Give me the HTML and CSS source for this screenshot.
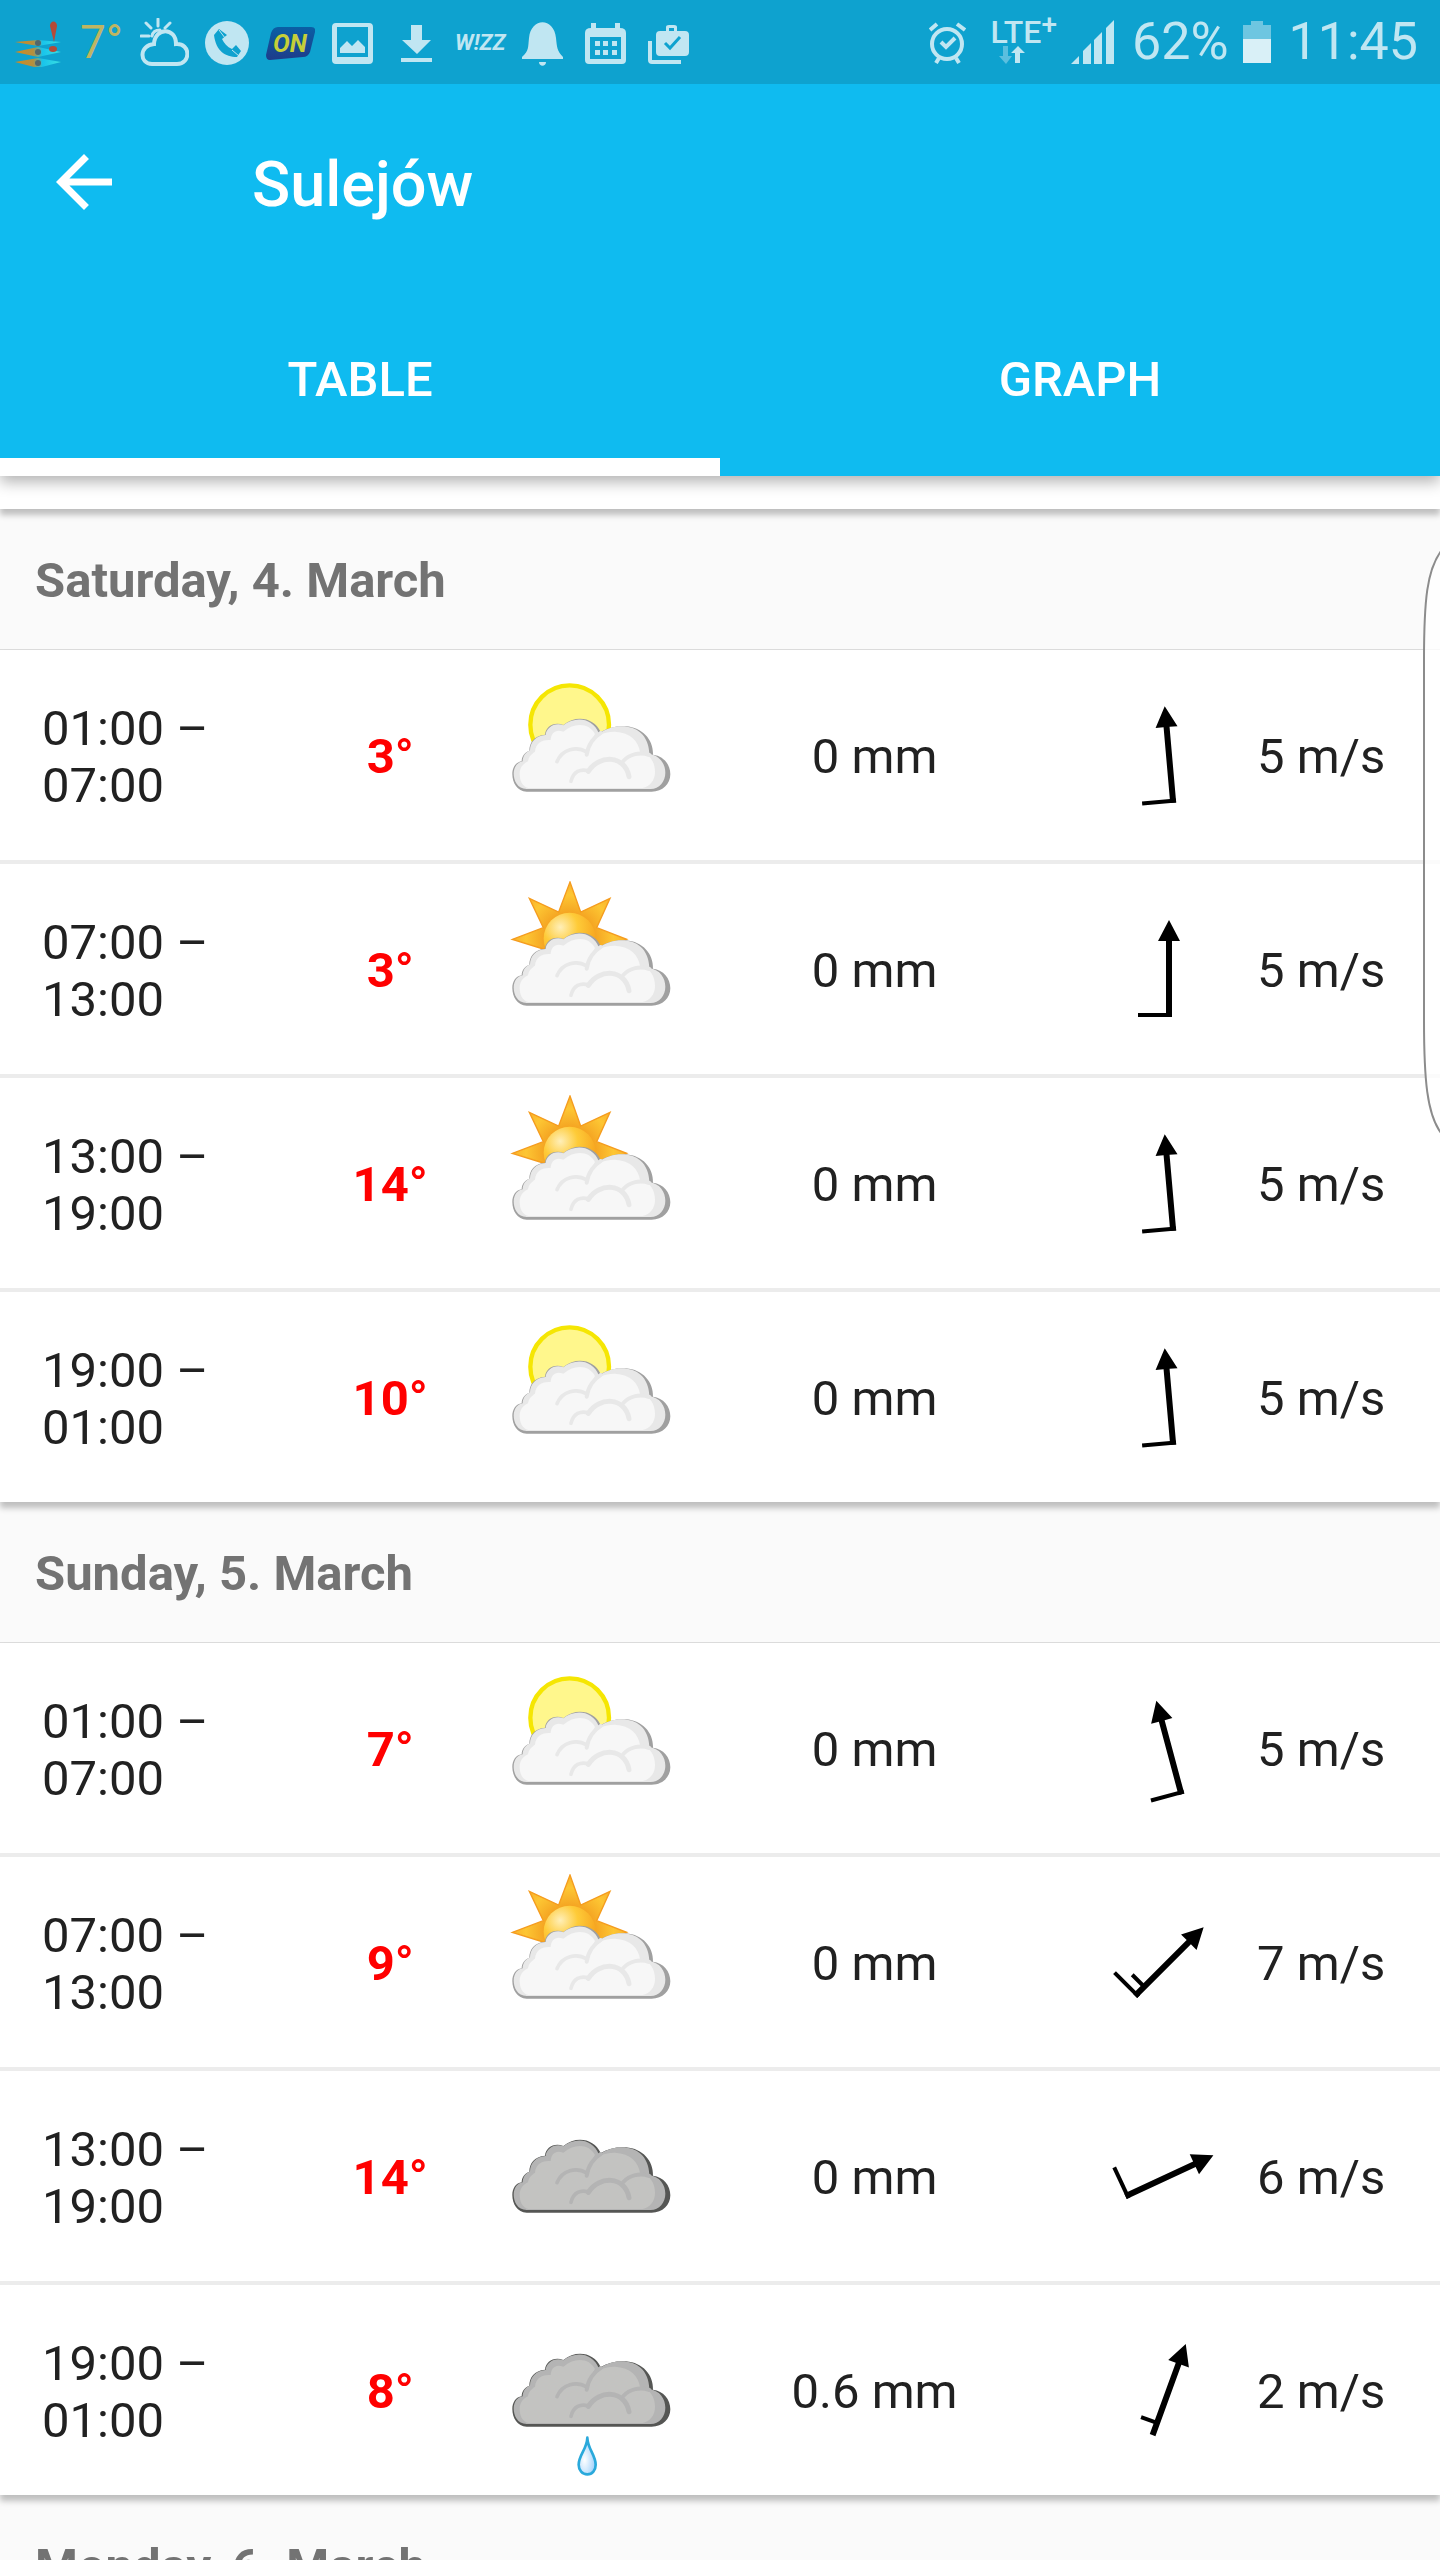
FILE: index.html
```html
<!DOCTYPE html>
<html lang="en">
<head>
    <meta charset="UTF-8">
    <meta name="viewport" content="width=device-width, initial-scale=1.0">
    <title>Sulejów</title>
    <link rel="stylesheet" href="styles.css">
</head>
<body>
    <!-- shared drawings -->
    <svg class="defs" width="0" height="0" aria-hidden="true">
        <defs>
            <radialGradient id="sunBall" cx="0.32" cy="0.28" r="0.75">
                <stop offset="0" stop-color="#ffefb8"/>
                <stop offset="0.45" stop-color="#fecb38"/>
                <stop offset="1" stop-color="#f6a21d"/>
            </radialGradient>
            <radialGradient id="sunRays" gradientUnits="userSpaceOnUse" cx="269" cy="194" r="175">
                <stop offset="0.45" stop-color="#f5a623"/>
                <stop offset="0.75" stop-color="#fdc633"/>
                <stop offset="1" stop-color="#f9b02a"/>
            </radialGradient>
            <radialGradient id="water" cx="0.35" cy="0.6" r="0.6">
                <stop offset="0" stop-color="#ffffff"/>
                <stop offset="1" stop-color="#a5d3fb"/>
            </radialGradient>
        </defs>

        <symbol id="cloud" viewBox="69 21 528 528">
            <path class="cloud-edge" d="M140 395C112 395 97 368 97 342C97 322 108 306 125 304C125 290 133 277 148 272C148 248 163 226 195 224C197 200 222 184 250 195C290 163 343 174 362 216C385 202 412 197 438 199C488 203 521 240 519 284C550 288 571 312 571 343C571 372 548 395 515 395Z"/>
            <path class="cloud-rim" d="M140 387C112 387 101 362 101 340C102 320 112 307 128 304C128 290 136 278 150 271C150 248 167 226 197 225C199 203 224 186 250 196C285 168 338 172 357 221C410 182 506 190 508 282C540 287 556 312 556 338C556 364 538 387 512 387Z"/>
            <path class="cloud-fill" d="M145 384C126 379 119 360 119 341C119 324 128 312 144 304C146 291 152 284 165 275C167 250 184 238 212 240C213 218 228 206 250 215C287 184 329 191 345 222L330 250C350 225 377 214 405 215C452 217 476 245 480 276C510 281 525 307 525 336C525 363 508 380 488 384Z"/>
            <g class="cloud-lines">
                <path stroke-width="11" d="M231 305C246 267 290 257 320 276"/>
                <path stroke-width="12" d="M320 284C324 254 343 230 362 219"/>
                <path stroke-width="11" d="M273 364C280 334 302 325 326 333"/>
                <path stroke-width="15" d="M325 334C357 283 435 284 447 350"/>
                <path stroke-width="12" d="M430 303C449 282 480 275 508 285"/>
            </g>
        </symbol>

        <symbol id="moon" viewBox="69 21 528 528">
            <circle cx="269" cy="194" r="118" fill="#fff78c" stroke="#f5e603" stroke-width="13"/>
        </symbol>

        <symbol id="sun" viewBox="69 21 528 528">
            <path d="M270 24L302 114L390 73L350 161L440 196L350 230L190 225L97 196L190 161L148 73L236 114Z" fill="url(#sunRays)" stroke="#f59c1f" stroke-width="4"/>
            <circle cx="269" cy="194" r="78" fill="url(#sunBall)"/>
        </symbol>

        <symbol id="drop" viewBox="69 21 528 528">
            <path d="M322 428C321 462 296 480 296 509C296 526 307 538 322 538C337 538 347 526 347 509C347 480 323 462 322 428Z" fill="url(#water)" stroke="#2aa9db" stroke-width="8" stroke-linejoin="round"/>
        </symbol>

        <symbol id="wind" viewBox="-50 -50 100 100" overflow="visible">
            <path d="M0 -49L11 -28H3V48H-3V-28H-11Z"/>
        </symbol>
        <symbol id="full-barb" viewBox="-50 -50 100 100" overflow="visible">
            <path d="M-31 44H3V48H-31Z"/>
        </symbol>
        <symbol id="half-barb" viewBox="-50 -50 100 100" overflow="visible">
            <path d="M-17 33H0V37H-17Z"/>
        </symbol>
    </svg>

    <div class="screen">
        <div class="status-bar">
            <div class="notifications">
                <svg viewBox="0 0 49 49">
                    <defs>
                        <linearGradient id="kite">
                            <stop offset="0" stop-color="#d08a1e"/>
                            <stop offset="0.4" stop-color="#b39040"/>
                            <stop offset="0.6" stop-color="#18c4ec"/>
                            <stop offset="1" stop-color="#3ce0e0"/>
                        </linearGradient>
                    </defs>
                    <g fill="url(#kite)">
                        <path d="M1 24L24 22L47 24L24 28Z"/>
                        <path d="M1 34L24 29L47 34L24 39Z"/>
                        <path d="M1 44L24 40L47 44L24 50Z"/>
                    </g>
                    <g fill="#53676b">
                        <circle cx="24" cy="25" r="3"/>
                        <circle cx="24" cy="34" r="3"/>
                        <circle cx="24" cy="45" r="3"/>
                    </g>
                    <path d="M36 8C36 2 43 2 43 8L40 24Z" fill="#b54a38"/>
                    <ellipse cx="39" cy="31" rx="4" ry="3" fill="#b54a38"/>
                </svg>
                <span class="temperature">7°</span>
                <svg viewBox="0 0 49 49" fill="none" stroke="#c0e6f2" stroke-width="3" stroke-linecap="round">
                    <path stroke-width="4" d="M12 46C-1 46 -1 27 14 26C15 9 36 9 36 26C51 25 51 46 37 46Z"/>
                    <path d="M18 1V8M6 5L11 10M30 5L25 10M1 18H9M12 18C13 13 16 12 20 12"/>
                </svg>
                <svg viewBox="0 0 49 49">
                    <circle cx="24" cy="25" r="22" fill="#c0e6f2"/>
                    <path d="M11 17C13 33 22 39 34 39L38 33L33 27L29 31C24 29 21 25 19 21L24 17L16 11Z" fill="#0ea2cf"/>
                    <path d="M16 12L22 20M29 32L36 38" stroke="#c0e6f2" stroke-width="1"/>
                </svg>
                <svg viewBox="0 0 49 49">
                    <defs>
                        <linearGradient id="badge" x2="0" y2="1">
                            <stop offset="0" stop-color="#0a5fa5"/>
                            <stop offset="1" stop-color="#1e3c8a"/>
                        </linearGradient>
                    </defs>
                    <path d="M12 9H45Q50 9 49 14L44 34Q42 39 37 39L4 42Q0 42 0 37L5 15Q7 9 12 9Z" fill="url(#badge)"/>
                    <text class="on-text" x="24" y="34">ON</text>
                </svg>
                <svg viewBox="0 0 49 49" fill="#c0e6f2">
                    <path fill-rule="evenodd" d="M7 5H40Q44 5 44 9V42Q44 46 40 46H7Q3 46 3 42V9Q3 5 7 5ZM8 9V39H39V9ZM11 35V30L18 23L23 28L29 22L36 29V35Z"/>
                </svg>
                <svg viewBox="0 0 49 49" fill="#c0e6f2">
                    <path d="M19 7H30V22H39L25 36L10 22H19ZM9 40H40V44H9Z"/>
                </svg>
                <span class="wizz">W!ZZ</span>
                <svg viewBox="0 0 49 49" fill="#c0e6f2">
                    <path d="M4 41V39C11 33 10 29 11 20C13 -1 36 -1 38 20C39 29 39 33 45 39V41ZM21 44H28C28 49 21 49 21 44Z"/>
                </svg>
                <svg viewBox="0 0 49 49" fill="#c0e6f2">
                    <path fill-rule="evenodd" d="M10 5H15V10H34V5H39V10Q45 10 45 15V42Q45 46 41 46H8Q4 46 4 42V15Q4 10 10 10ZM9 19V41H40V19ZM14 23H19V28H14ZM22 23H27V28H22ZM31 23H36V28H31ZM14 32H19V37H14ZM22 32H27V37H22ZM31 32H36V37H31Z"/>
                </svg>
                <svg viewBox="0 0 49 49">
                    <path fill="#c0e6f2" fill-rule="evenodd" d="M22 13V9Q22 7 25 7H30Q33 7 33 9V13H41Q45 13 45 17V34Q45 38 41 38H16Q12 38 12 34V17Q12 13 16 13ZM25 13H30V10H25ZM4 23H8V42H37V46H8Q4 46 4 42Z"/>
                    <path d="M21 25L26 30L36 19" fill="none" stroke="#0ea2cf" stroke-width="3"/>
                </svg>
            </div>
            <div class="system">
                <svg class="alarm" viewBox="0 0 37 43" fill="none" stroke="#c0e6f2" stroke-width="4">
                    <circle cx="18" cy="23" r="15"/>
                    <path d="M1 9L8 3M36 9L28 3M10 37L7 42M27 37L30 42M12 21L17 26L26 17"/>
                </svg>
                <div class="network">
                    <span class="lte">LTE</span><span class="plus">+</span>
                    <svg viewBox="0 0 28 20">
                        <path d="M5 0H10V10H14L8 18L1 10H5Z" fill="#5bbfdf"/>
                        <path d="M17 17H22V7H27L20 0L13 7H17Z" fill="#c0e6f2"/>
                    </svg>
                </div>
                <svg class="signal" viewBox="0 0 43 44" fill="#c0e6f2">
                    <path d="M0 44L8 36V44ZM12 44V31L20 23V44ZM23 44V20L31 12V44ZM35 44V8L43 0V44Z"/>
                </svg>
                <span>62%</span>
                <svg class="battery" viewBox="0 0 28 42">
                    <path d="M0 18V4H8V0H20V4H28V18Z" fill="#6ec6e1"/>
                    <path d="M0 18H28V42H0Z" fill="#d9f0f7"/>
                </svg>
                <span class="clock">11:45</span>
            </div>
        </div>

        <header class="app-bar">
            <div class="toolbar">
                <button class="back" type="button" aria-label="Back">
                    <svg viewBox="0 0 24 24" fill="#fff">
                        <path d="M20 11H7.83l5.59-5.59L12 4l-8 8 8 8 1.41-1.41L7.83 13H20v-2z"/>
                    </svg>
                </button>
                <h1>Sulejów</h1>
            </div>
            <nav class="tabs">
                <button class="tab active" type="button">TABLE</button>
                <button class="tab" type="button">GRAPH</button>
            </nav>
        </header>

        <main>
            <div class="card card-end"></div>

            <h2>Saturday, 4. March</h2>
            <table class="card">
                <tr>
                    <td class="time">01:00 –<br>07:00</td>
                    <td class="temp">3°</td>
                    <td class="weather"><svg class="light"><use href="#moon"/><use href="#cloud"/></svg></td>
                    <td class="rain">0 mm</td>
                    <td class="wind"><svg style="transform: rotate(-5deg)"><use href="#wind"/><use href="#full-barb"/></svg></td>
                    <td class="speed">5 m/s</td>
                </tr>
                <tr>
                    <td class="time">07:00 –<br>13:00</td>
                    <td class="temp">3°</td>
                    <td class="weather"><svg class="light"><use href="#sun"/><use href="#cloud"/></svg></td>
                    <td class="rain">0 mm</td>
                    <td class="wind"><svg><use href="#wind"/><use href="#full-barb"/></svg></td>
                    <td class="speed">5 m/s</td>
                </tr>
                <tr>
                    <td class="time">13:00 –<br>19:00</td>
                    <td class="temp">14°</td>
                    <td class="weather"><svg class="light"><use href="#sun"/><use href="#cloud"/></svg></td>
                    <td class="rain">0 mm</td>
                    <td class="wind"><svg style="transform: rotate(-5deg)"><use href="#wind"/><use href="#full-barb"/></svg></td>
                    <td class="speed">5 m/s</td>
                </tr>
                <tr>
                    <td class="time">19:00 –<br>01:00</td>
                    <td class="temp">10°</td>
                    <td class="weather"><svg class="light"><use href="#moon"/><use href="#cloud"/></svg></td>
                    <td class="rain">0 mm</td>
                    <td class="wind"><svg style="transform: rotate(-5deg)"><use href="#wind"/><use href="#full-barb"/></svg></td>
                    <td class="speed">5 m/s</td>
                </tr>
            </table>

            <h2>Sunday, 5. March</h2>
            <table class="card">
                <tr>
                    <td class="time">01:00 –<br>07:00</td>
                    <td class="temp">7°</td>
                    <td class="weather"><svg class="light"><use href="#moon"/><use href="#cloud"/></svg></td>
                    <td class="rain">0 mm</td>
                    <td class="wind"><svg style="transform: rotate(-15deg)"><use href="#wind"/><use href="#full-barb"/></svg></td>
                    <td class="speed">5 m/s</td>
                </tr>
                <tr>
                    <td class="time">07:00 –<br>13:00</td>
                    <td class="temp">9°</td>
                    <td class="weather"><svg class="light"><use href="#sun"/><use href="#cloud"/></svg></td>
                    <td class="rain">0 mm</td>
                    <td class="wind"><svg style="transform: rotate(45deg)"><use href="#wind"/><use href="#full-barb"/><use href="#half-barb"/></svg></td>
                    <td class="speed">7 m/s</td>
                </tr>
                <tr>
                    <td class="time">13:00 –<br>19:00</td>
                    <td class="temp">14°</td>
                    <td class="weather"><svg class="dark"><use href="#cloud"/></svg></td>
                    <td class="rain">0 mm</td>
                    <td class="wind"><svg style="transform: rotate(65deg)"><use href="#wind"/><use href="#full-barb"/></svg></td>
                    <td class="speed">6 m/s</td>
                </tr>
                <tr>
                    <td class="time">19:00 –<br>01:00</td>
                    <td class="temp">8°</td>
                    <td class="weather"><svg class="dark"><use href="#cloud"/><use href="#drop"/></svg></td>
                    <td class="rain">0.6 mm</td>
                    <td class="wind"><svg style="transform: rotate(20deg)"><use href="#wind"/><use href="#half-barb"/></svg></td>
                    <td class="speed">2 m/s</td>
                </tr>
            </table>

            <h2>Monday, 6. March</h2>
        </main>

        <!-- edge panel handle over the list -->
        <svg class="edge-handle" viewBox="0 0 18 584">
            <path d="M19 1C5 20 2 50 2 110V470C2 530 5 564 19 583" fill="#fff" fill-opacity="0.8" stroke="#8c8c8c" stroke-width="2"/>
        </svg>
    </div>
</body>
</html>
```
FILE: styles.css
```css
* {
    box-sizing: border-box;
}

body {
    margin: 0;
    font-family: Roboto, sans-serif;
    font-size: 49px;
    color: #212121;
    background-color: #fafafa;
}

svg {
    display: block;
}

.defs {
    position: absolute;
}

.screen {
    position: relative;
    height: 100vh;
    overflow: hidden;
}

/* status bar */
.status-bar {
    position: relative;
    z-index: 3;
    display: flex;
    justify-content: space-between;
    align-items: center;
    height: 84px;
    padding: 0 22px 0 14px;
    background-color: #0ea2cf;
    color: #c0e6f2;
    font-size: 52px;
    line-height: 84px;
}

.notifications {
    display: flex;
    align-items: center;
    gap: 14px;
}

.notifications > * {
    width: 49px;
    height: 49px;
    text-align: center;
    line-height: 49px;
}

.notifications .temperature {
    font-size: 46px;
    color: #bfb562;
}

.on-text {
    fill: #c5cf38;
    font-size: 25px;
    font-weight: 700;
    font-style: italic;
    text-anchor: middle;
}

.notifications .wizz {
    font-size: 22px;
    font-weight: 700;
    font-style: italic;
}

.system {
    display: flex;
    align-items: center;
    gap: 14px;
}

.alarm {
    width: 37px;
    height: 43px;
    margin-right: 10px;
}

.network {
    display: grid;
    grid-template-columns: auto auto;
    align-content: center;
    font-weight: 500;
}

.lte {
    font-size: 32px;
    line-height: 28px;
}

.plus {
    font-size: 28px;
    line-height: 14px;
}

.network svg {
    grid-column: 1 / 3;
    width: 28px;
    height: 20px;
    margin-left: 8px;
}

.signal {
    width: 43px;
    height: 44px;
    margin-right: 4px;
}

.battery {
    width: 28px;
    height: 42px;
    margin-right: 4px;
}

/* app bar */
.app-bar {
    position: relative;
    z-index: 2;
    background-color: #0fbbf0;
    color: #fff;
    box-shadow: 0 6px 14px rgba(0, 0, 0, 0.3);
}

.toolbar {
    display: flex;
    align-items: center;
    gap: 126px;
    height: 196px;
    padding-left: 42px;
}

.back {
    padding: 0;
    border: none;
    background: none;
    cursor: pointer;
}

.back svg {
    width: 84px;
    height: 84px;
}

h1 {
    margin: 0;
    padding-top: 4px;
    font-size: 63px;
    font-weight: 500;
}

.tabs {
    display: flex;
}

.tab {
    flex: 1;
    height: 196px;
    padding: 21px 0 0;
    border: none;
    border-bottom: 18px solid transparent;
    background: none;
    color: #fff;
    font-family: inherit;
    font-size: 49px;
    font-weight: 500;
    cursor: pointer;
}

.tab.active {
    border-bottom-color: #fff;
}

/* forecast list */
.card {
    position: relative;
    z-index: 1;
    background-color: #fff;
    box-shadow: 0 6px 6px rgba(0, 0, 0, 0.24);
}

.card-end {
    height: 33px;
}

h2 {
    height: 141px;
    margin: 0;
    padding-left: 35px;
    border-bottom: 1px solid #dcdcdc;
    color: #737373;
    font-size: 49px;
    font-weight: 700;
    line-height: 143px;
}

table {
    width: 100%;
    table-layout: fixed;
    border-collapse: separate;
    border-spacing: 0;
}

td {
    height: 214px;
    padding: 3px 0 0;
    border-bottom: 4px solid #ececec;
    line-height: 57px;
    text-align: center;
}

tr:last-child td {
    height: 210px;
    border-bottom: none;
}

.time {
    width: 19.4%;
    padding-left: 42px;
    text-align: left;
}

.temp {
    width: 15.4%;
    color: #f00;
    font-weight: 700;
}

.weather {
    width: 12.5%;
    padding: 0;
}

.weather svg {
    width: 176px;
    height: 176px;
    margin: 0 auto;
}

.rain {
    width: 27.7%;
    padding-right: 12px;
}

.wind {
    width: 12.3%;
    padding: 0;
}

.wind svg {
    width: 100px;
    height: 100px;
    margin: 0 auto;
    overflow: visible;
}

.speed {
    width: 12.7%;
    text-align: left;
}

/* cloud colours */
.light {
    --edge: #a0a0a0;
    --rim: #e8e8e8;
    --fill: #f7f7f7;
}

.dark {
    --edge: #555654;
    --rim: #b4b4b4;
    --fill: #c3c3c1;
}

.cloud-edge {
    fill: var(--edge);
}

.cloud-rim {
    fill: var(--rim);
}

.cloud-fill {
    fill: var(--fill);
}

.cloud-lines {
    fill: none;
    stroke: var(--rim);
    stroke-linecap: round;
}

.edge-handle {
    position: absolute;
    z-index: 3;
    top: 550px;
    right: 0;
    width: 18px;
    height: 584px;
}
```
